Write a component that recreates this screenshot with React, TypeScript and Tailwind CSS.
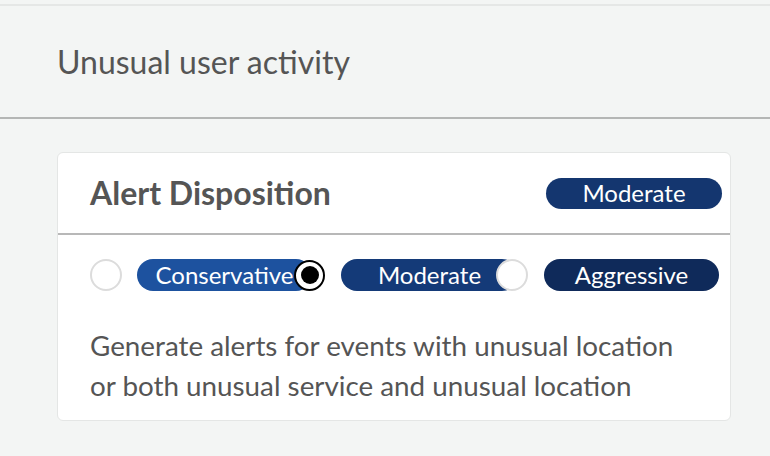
import React from 'react';

const options = [
  { label: 'Conservative', bg: 'bg-[#1d529f]', width: 'w-[175px]', radio: 'ml-0', pill: 'ml-[15px]', checked: false },
  { label: 'Moderate', bg: 'bg-[#143a78]', width: 'w-[177px]', radio: '-ml-[18px]', pill: 'ml-[16px]', checked: true },
  { label: 'Aggressive', bg: 'bg-[#0f2a5a]', width: 'w-[175px]', radio: '-ml-[22px]', pill: 'ml-[16px]', checked: false },
];

const Radio: React.FC<{ checked: boolean; className: string }> = ({ checked, className }) =>
  checked ? (
    <span
      className={`relative z-10 flex h-[31px] w-[31px] shrink-0 items-center justify-center rounded-full border-[2.5px] border-black bg-white ${className}`}
    >
      <span className="block h-[18px] w-[18px] rounded-full bg-black" />
    </span>
  ) : (
    <span
      className={`relative z-10 block h-[32px] w-[32px] shrink-0 rounded-full border-2 border-[#dcdcdc] bg-white ${className}`}
    />
  );

export default function App() {
  return (
    <div className="min-h-[456px] bg-[#f3f5f4] pt-[4px] text-[#555555]" style={{ fontFamily: 'Lato, "Open Sans", sans-serif' }}>
      <div className="border-t-2 border-[#e5e7e6]">
        {/* Section header */}
        <div className="flex h-[113px] items-center border-b-2 border-[#b4b6b5] px-[57px]">
          <h1 className="text-[32px] font-normal">Unusual user activity</h1>
        </div>

        {/* Card */}
        <div className="ml-[57px] mt-[33px] w-[674px] rounded-[6px] border border-[#e4e6e5] bg-white pb-[14px]">
          <div className="flex h-[82px] items-center justify-between border-b-2 border-[#b8b8b8] pl-[32px] pr-[8px]">
            <h2 className="text-[32px] font-bold">Alert Disposition</h2>
            <span className="flex h-[31px] w-[176px] items-center justify-center rounded-full bg-[#14366f] text-[24px] text-white">
              Moderate
            </span>
          </div>

          <div className="flex items-center pl-[32px] pt-[24px]">
            {options.map((o) => (
              <React.Fragment key={o.label}>
                <Radio checked={o.checked} className={o.radio} />
                <span
                  className={`flex h-[32px] shrink-0 items-center justify-center rounded-full text-[24px] text-white ${o.bg} ${o.width} ${o.pill}`}
                >
                  {o.label}
                </span>
              </React.Fragment>
            ))}
          </div>

          <p className="mt-[35px] pl-[32px] text-[27.8px] leading-[40px]">
            Generate alerts for events with unusual location
            <br />
            or both unusual service and unusual location
          </p>
        </div>
      </div>
    </div>
  );
}
